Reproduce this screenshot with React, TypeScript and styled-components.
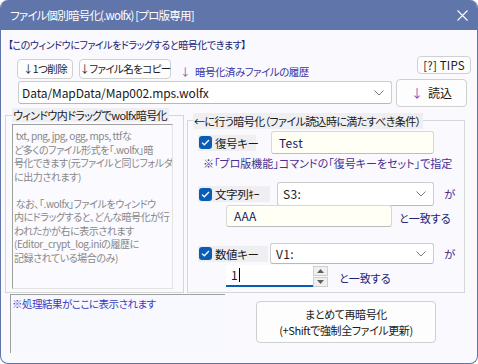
import React from "react";
import styled, { createGlobalStyle } from "styled-components";

const Global = createGlobalStyle`
  html, body { margin: 0; padding: 0; background: #ffffff; }
  body {
    font-family: "Noto Sans CJK JP", "Noto Sans", sans-serif;
    font-feature-settings: "palt";
    color: #1a1a1a;
  }
  * { box-sizing: border-box; }
`;

const Window = styled.div`
  width: 478px;
  height: 364px;
  display: flex;
  flex-direction: column;
  background: #f9f9fe;
  border: 1px solid #6075a9;
  border-top: none;
  border-radius: 8px;
  overflow: hidden;
`;

const TitleBar = styled.div`
  height: 30px;
  flex: none;
  background: #6075a9;
  color: #ffffff;
  display: flex;
  align-items: center;
  padding-left: 9px;
  padding-right: 9px;
  font-size: 11.5px;
  letter-spacing: -0.8px;
  line-height: 16px;
  white-space: nowrap;
`;

const TitleText = styled.div`
  flex: 1;
`;

const Body = styled.div`
  flex: 1;
  display: flex;
  flex-direction: column;
`;

const Notice = styled.div`
  margin-top: 8px;
  margin-left: 7px;
  height: 14px;
  font-size: 10px;
  letter-spacing: -0.45px;
  line-height: 14px;
  color: #222270;
  white-space: nowrap;
`;

const ToolArea = styled.div`
  margin-top: 4px;
  display: flex;
`;

const ToolLeft = styled.div`
  margin-left: 16px;
  width: 376px;
  padding-top: 3px;
  display: flex;
  flex-direction: column;
`;

const ButtonRow = styled.div`
  display: flex;
  align-items: center;
  gap: 6px;
  height: 20px;
`;

const Button = styled.button<{ $w: number; $h: number }>`
  width: ${(p) => p.$w}px;
  height: ${(p) => p.$h}px;
  padding: 0;
  margin: 0;
  background: #fdfdfd;
  border: 1px solid #d0d0d0;
  border-radius: 4px;
  font-family: inherit;
  font-feature-settings: "palt";
  font-size: 10.5px;
  letter-spacing: -0.6px;
  line-height: 14px;
  color: #1a1a1a;
  display: flex;
  align-items: center;
  justify-content: center;
  white-space: nowrap;
  flex: none;
`;

const HistoryLabel = styled.div`
  margin-left: 3px;
  margin-top: 6px;
  font-size: 10.5px;
  letter-spacing: -0.5px;
  line-height: 14px;
  color: #3a36a8;
  white-space: nowrap;
`;

const Arrow = styled.span`
  color: #8048c8;
  margin-right: 5px;
`;

const Select = styled.div<{ $w: number; $h: number; $ml?: number }>`
  width: ${(p) => p.$w}px;
  height: ${(p) => p.$h}px;
  margin-left: ${(p) => p.$ml ?? 0}px;
  flex: none;
  background: #ffffff;
  border: 1px solid #cdcdcd;
  border-bottom-color: #b8b8b8;
  border-radius: 3px;
  display: flex;
  align-items: center;
  padding-left: 5px;
  padding-right: 7px;
  font-size: 12px;
  line-height: 14px;
  color: #1a1a1a;
`;

const SelectText = styled.span`
  flex: 1;
  letter-spacing: 0.3px;
`;

const Combo = styled(Select)`
  margin-top: 2px;
  margin-left: 1px;
  padding-left: 3px;
  & > span { letter-spacing: -0.1px; }
`;

const ToolRight = styled.div`
  margin-left: 3px;
  width: 75px;
  display: flex;
  flex-direction: column;
  align-items: flex-start;
`;

const TipsButton = styled(Button)`
  align-self: flex-end;
  font-size: 11.5px;
  letter-spacing: 0.2px;
`;

const LoadButton = styled(Button)`
  margin-top: 5px;
  font-size: 12px;
  letter-spacing: 0;
`;

const Middle = styled.div`
  display: flex;
  height: 186px;
`;

const Group = styled.div<{ $w: number; $h: number; $top: number; $left: number }>`
  width: ${(p) => p.$w}px;
  height: ${(p) => p.$h}px;
  margin-top: ${(p) => p.$top}px;
  margin-left: ${(p) => p.$left}px;
  border: 1px solid #d6d6d6;
  display: flex;
  flex-direction: column;
  flex: none;
`;

const Legend = styled.div<{ $h: number; $top: number; $left: number }>`
  align-self: flex-start;
  height: ${(p) => p.$h}px;
  margin-top: ${(p) => p.$top}px;
  margin-left: ${(p) => p.$left}px;
  background: #efeff2;
  font-size: 11px;
  letter-spacing: -0.6px;
  line-height: ${(p) => p.$h}px;
  padding: 0 2px 0 1px;
  color: #1a1a1a;
  white-space: nowrap;
`;

const DropArea = styled.div`
  margin-left: 6px;
  margin-top: 2px;
  width: 161px;
  height: 165px;
  border-top: 1px solid #a0a0a0;
  border-left: 1px solid #a0a0a0;
  border-right: 1px solid #e4e4e4;
  border-bottom: 1px solid #e4e4e4;
  background: #fafaff;
  color: #888888;
  font-size: 10px;
  line-height: 13.5px;
  padding: 4px 0 0 1px;
  white-space: pre;
  overflow: hidden;
  letter-spacing: -0.42px;
`;

const Row = styled.div<{ $top: number; $left?: number }>`
  display: flex;
  align-items: center;
  margin-top: ${(p) => p.$top}px;
  margin-left: ${(p) => p.$left ?? 10}px;
`;

const CheckLabel = styled.div<{ $w: number }>`
  width: ${(p) => p.$w}px;
  height: 16px;
  background: #efeff2;
  display: flex;
  align-items: center;
  padding-left: 1px;
  gap: 3px;
  font-size: 11.5px;
  letter-spacing: -0.4px;
  line-height: 16px;
  color: #1a1a1a;
  white-space: nowrap;
  flex: none;
`;

const CheckBox = styled.span`
  width: 13px;
  height: 13px;
  border-radius: 3px;
  background: #0a5db5;
  display: inline-flex;
  align-items: center;
  justify-content: center;
  flex: none;
`;

const TextInput = styled.div<{ $w: number; $h: number; $ml: number }>`
  width: ${(p) => p.$w}px;
  height: ${(p) => p.$h}px;
  margin-left: ${(p) => p.$ml}px;
  background: #fffff6;
  border: 1px solid #d8d8d8;
  border-bottom-color: #bdbdbd;
  border-radius: 3px;
  display: flex;
  align-items: center;
  padding-left: 7px;
  font-size: 12px;
  letter-spacing: 0.3px;
  line-height: 14px;
  color: #1a1a60;
  flex: none;
`;

const NumInput = styled.div`
  width: 87px;
  height: 22px;
  background: #ffffff;
  border-bottom: 2px solid #0a5db5;
  display: flex;
  align-items: center;
  padding-left: 5px;
  font-size: 12px;
  line-height: 14px;
  color: #1a1a1a;
  flex: none;
`;

const Caret = styled.span`
  display: inline-block;
  width: 1px;
  height: 14px;
  background: #000000;
  margin-left: 1px;
`;

const Spin = styled.div`
  width: 15px;
  height: 21px;
  display: flex;
  flex-direction: column;
  gap: 1px;
  flex: none;
`;

const SpinBtn = styled.div`
  flex: 1;
  background: #f0f0f0;
  border: 1px solid #cfcfcf;
  display: flex;
  align-items: center;
  justify-content: center;
`;

const Note = styled.div`
  margin-top: 2px;
  margin-left: 15px;
  font-size: 11px;
  letter-spacing: 0;
  line-height: 14px;
  color: #4a2e8e;
  white-space: nowrap;
`;

const Ga = styled.span`
  margin-left: 10px;
  font-size: 11.5px;
  color: #4a2e8e;
`;

const Match = styled.span<{ $ml: number }>`
  margin-left: ${(p) => p.$ml}px;
  margin-top: 4px;
  font-size: 11px;
  letter-spacing: 0;
  color: #222276;
  white-space: nowrap;
`;

const Bottom = styled.div`
  display: flex;
  margin-top: 1px;
`;

const Result = styled.div`
  margin-left: 9px;
  width: 215px;
  height: 59px;
  border-top: 1px solid #a0a0a0;
  border-left: 1px solid #a0a0a0;
  background: #f8f8ff;
  font-size: 10.5px;
  letter-spacing: -0.5px;
  line-height: 14px;
  padding: 2px 0 0 1px;
  color: #3a3ac0;
  white-space: nowrap;
`;

const BigButton = styled(Button)`
  margin-left: 31px;
  margin-top: 7px;
  flex-direction: column;
  font-size: 11px;
  letter-spacing: -0.4px;
  line-height: 16px;
`;

const Chevron = () => (
  <svg width="10" height="6" viewBox="0 0 10 6">
    <path d="M0.5 0.5 L5 5 L9.5 0.5" fill="none" stroke="#7a7a7a" strokeWidth="1" />
  </svg>
);

const Check = () => (
  <svg width="9" height="7" viewBox="0 0 9 7">
    <path d="M1 3.6 L3.3 5.8 L8 1" fill="none" stroke="#ffffff" strokeWidth="1.3" />
  </svg>
);

const CloseIcon = () => (
  <svg width="11" height="11" viewBox="0 0 11 11">
    <path d="M0.5 0.5 L10.5 10.5 M10.5 0.5 L0.5 10.5" stroke="#ffffff" strokeWidth="1.1" />
  </svg>
);

const Tri = ({ up }: { up: boolean }) => (
  <svg width="7" height="4" viewBox="0 0 7 4">
    <path d={up ? "M0 4 L3.5 0 L7 4 Z" : "M0 0 L3.5 4 L7 0 Z"} fill="#606060" />
  </svg>
);

const dropText = ` txt, png, jpg, ogg, mps, ttfな
ど多くのファイル形式を「.wolfx」暗
号化できます(元ファイルと同じフォルダ
に出力されます)

 なお、「.wolfx」ファイルをウィンドウ
内にドラッグすると、どんな暗号化が行
われたかが右に表示されます
(Editor_crypt_log.iniの履歴に
記録されている場合のみ)`;

export default function App() {
  return (
    <>
      <Global />
      <Window>
        <TitleBar>
          <TitleText>ファイル個別暗号化(.wolfx) [プロ版専用]</TitleText>
          <CloseIcon />
        </TitleBar>
        <Body>
          <Notice>【このウィンドウにファイルをドラッグすると暗号化できます】</Notice>
          <ToolArea>
            <ToolLeft>
              <ButtonRow>
                <Button $w={56} $h={20}>↓1つ削除</Button>
                <Button $w={92} $h={20}>↓ファイル名をコピー</Button>
                <HistoryLabel>
                  <Arrow>↓</Arrow>暗号化済みファイルの履歴
                </HistoryLabel>
              </ButtonRow>
              <Combo $w={374} $h={23}>
                <SelectText>Data/MapData/Map002.mps.wolfx</SelectText>
                <Chevron />
              </Combo>
            </ToolLeft>
            <ToolRight>
              <TipsButton $w={54} $h={18}>[?] TIPS</TipsButton>
              <LoadButton $w={71} $h={28}>
                <Arrow>↓</Arrow>読込
              </LoadButton>
            </ToolRight>
          </ToolArea>
          <Middle>
            <Group $w={179} $h={178} $top={8} $left={4}>
              <Legend $h={14} $top={-8} $left={6}>ウィンドウ内ドラッグでwolfx暗号化</Legend>
              <DropArea>{dropText}</DropArea>
            </Group>
            <Group $w={278} $h={173} $top={13} $left={3}>
              <Legend $h={16} $top={-8} $left={5}>←に行う暗号化（ファイル読込時に満たすべき条件）</Legend>
              <Row $top={2}>
                <CheckLabel $w={58}>
                  <CheckBox><Check /></CheckBox>復号キー
                </CheckLabel>
                <TextInput $w={163} $h={23} $ml={15}>Test</TextInput>
              </Row>
              <Note>※「プロ版機能」コマンドの「復号キーをセット」で指定</Note>
              <Row $top={12}>
                <CheckLabel $w={72}>
                  <CheckBox><Check /></CheckBox>文字列ｷｰ
                </CheckLabel>
                <Select $w={157} $h={24} $ml={7}>
                  <SelectText>S3:</SelectText>
                  <Chevron />
                </Select>
                <Ga>が</Ga>
              </Row>
              <Row $top={-1} $left={38}>
                <TextInput $w={166} $h={22} $ml={0}>AAA</TextInput>
                <Match $ml={7}>と一致する</Match>
              </Row>
              <Row $top={16}>
                <CheckLabel $w={70}>
                  <CheckBox><Check /></CheckBox>数値キー
                </CheckLabel>
                <Select $w={164} $h={21} $ml={2}>
                  <SelectText>V1:</SelectText>
                  <Chevron />
                </Select>
                <Ga>が</Ga>
              </Row>
              <Row $top={1} $left={38}>
                <NumInput>
                  1<Caret />
                </NumInput>
                <Spin>
                  <SpinBtn><Tri up /></SpinBtn>
                  <SpinBtn><Tri up={false} /></SpinBtn>
                </Spin>
                <Match $ml={11}>と一致する</Match>
              </Row>
            </Group>
          </Middle>
          <Bottom>
            <Result>※処理結果がここに表示されます</Result>
            <BigButton $w={180} $h={42}>
              <span>まとめて再暗号化</span>
              <span>(+Shiftで強制全ファイル更新)</span>
            </BigButton>
          </Bottom>
        </Body>
      </Window>
    </>
  );
}
